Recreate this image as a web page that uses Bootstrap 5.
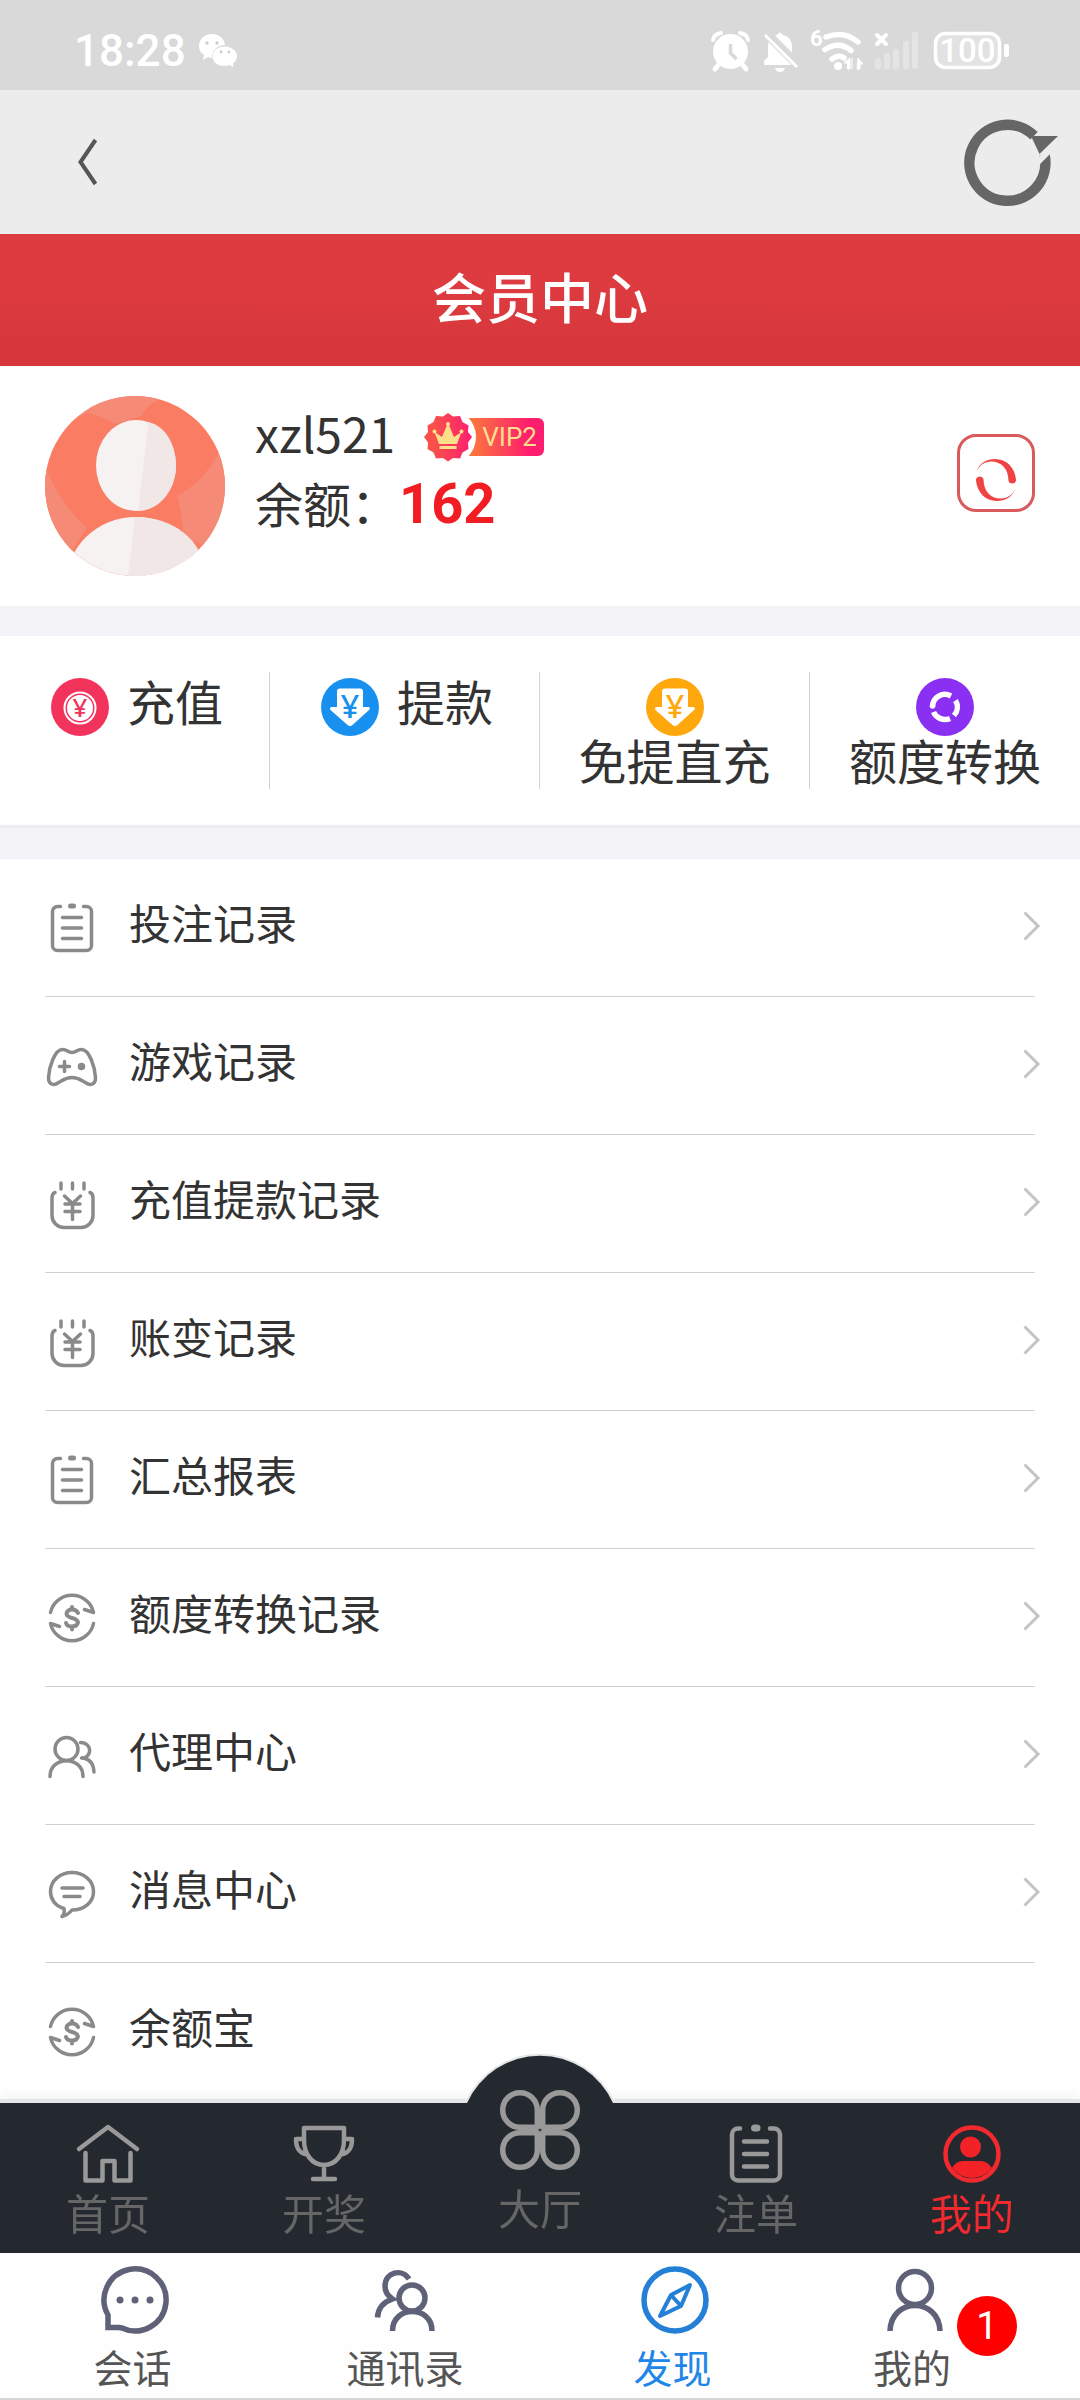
<!DOCTYPE html>
<html lang="zh-CN">
<head>
<meta charset="utf-8">
<meta name="viewport" content="width=device-width, initial-scale=1">
<title>会员中心</title>
<link href="https://cdn.jsdelivr.net/npm/bootstrap@5.3.0/dist/css/bootstrap.min.css" rel="stylesheet">
<style>
  body { font-family: "Noto Sans CJK SC", "Noto Sans", sans-serif; color: #333; background: #fff; padding-bottom: 296px; }
  svg { display: block; flex: none; overflow: visible; }
  a { color: inherit; text-decoration: none; }
  .plain-btn { background: none; border: 0; padding: 0; color: inherit; }

  .status-bar { background: #d9d9d9; color: #fff; height: 90px; padding: 18px 71px 0 74px; }
  .clock { font: 500 44px/66px Roboto, sans-serif; }
  .wechat { margin: 16px 0 0 13px; }
  .status-icons { margin-top: 10px; }
  .app-bar { background: #ececec; height: 144px; padding: 0 22px 0 78px; }
  .page-title { background: linear-gradient(#dd3b40 40%, #d5363b); color: #fff; height: 132px; font-size: 54px; font-weight: 500; line-height: 124px; }

  .profile { height: 240px; padding: 30px 45px 0; gap: 30px; }
  .user-name { font-size: 48px; line-height: 66px; }
  .user-line { gap: 29px; padding-top: 3px; }
  .vip { height: 48px; width: 120px; margin-top: 10px; }
  .vip-pill { position: absolute; left: 45px; top: 5px; width: 75px; height: 38px; border-radius: 0 6px 6px 0; background: linear-gradient(90deg, #fb7a3c, #fe1d6e 80%); color: #fdde8b; font: 400 26px/38px Roboto, sans-serif; padding-left: 13px; }
  .balance { font-size: 48px; line-height: 74px; }
  .balance strong { font: 700 56px/74px Roboto, "Noto Sans", sans-serif; color: #f21d22; }
  .refresh { width: 78px; height: 78px; border: 3px solid #d85a5b; border-radius: 19px; margin-top: 38px; padding-top: 21px; }

  .band { background: #f4f3f8; height: 30px; }
  .band-line { border-top: 3px solid #ededef; height: 34px; }
  .actions { padding: 36px 0; }
  .action { min-height: 117px; column-gap: 18px; font-size: 48px; line-height: 58px; padding: 0 20px; }
  .action:not(:last-child) { border-right: 1px solid #d2d2d2; }
  .action.inline { padding: 0 18px 0 23px; line-height: 56px; }
  .action svg { margin: 6px 0 -6px; }

  .menu { margin: 0 45px; }
  .menu-row { height: 138px; gap: 30px; font-size: 42px; border-bottom: 1px solid #d0d0d0; }
  .menu-row.final { border-bottom-color: transparent; }
  .menu-row span { line-height: 62px; padding-bottom: 12px; }
  .menu-row .line-icon { width: 54px; height: 54px; margin-bottom: 2px; fill: none; stroke: #8a8a8a; stroke-width: 3.5; stroke-linecap: round; stroke-linejoin: round; }
  .chevron { margin: 0 -5px 4px 0; }

  .site-tabs { background: #24282f; height: 150px; box-shadow: 0 -4px 0 #e4e5e9, 0 -8px 10px rgba(0,0,0,.05); color: #666; }
  .site-tab { padding-top: 19px; font-size: 42px; line-height: 44px; gap: 6px; }
  .site-tab svg { fill: none; stroke: #999; stroke-width: 4.5; stroke-linecap: round; stroke-linejoin: round; }
  .site-tab.chosen { color: #f22a2f; }
  .site-tab.hall { padding-top: 0; gap: 15px; }
  .hall .hump { position: absolute; left: 50%; top: -46px; margin-left: -75px; }
  .hall .clover, .hall span { position: relative; }
  .hall .clover { margin-top: -13px; }

  .chat-tabs { background: #fefefe; height: 147px; border-bottom: 2px solid #d6d6d6; color: #555; }
  .chat-tab { padding-top: 9px; font-size: 39px; line-height: 44px; gap: 6px; }
  .chat-tab svg { fill: none; stroke: #5f6178; stroke-width: 5.5; }
  .chat-tab .stack { gap: 6px; }
  .chat-tab .label { padding-right: 5px; }
  .chat-tab.chosen { color: #2186e8; }
  .chat-tab.chosen svg { stroke: #2480d6; }
  .count { width: 60px; height: 60px; background: #f00; color: #fff; font: 400 38px/60px Roboto, sans-serif; margin-top: 34px; }
</style>
</head>
<body>

<svg width="0" height="0" class="position-absolute" aria-hidden="true">
  <defs>
    <symbol id="i-clip" viewBox="0 0 54 54"><path d="M15.500 6.500h-3a5 5 0 0 0-5 5v34a5 5 0 0 0 5 5h29a5 5 0 0 0 5-5v-34a5 5 0 0 0-5-5h-3M17.500 17.500h19M17.500 28h19M17.500 38.500h19"/><path d="M25.500 6h3" stroke-width="5"/></symbol>
    <symbol id="i-yuan" viewBox="0 0 54 54"><path d="M10 16.500q-3 1-3 6v17a12 12 0 0 0 12 12h17a12 12 0 0 0 12-12v-17q0-5-3-6M16 7v6M27.500 7v6M39 7v6M19.500 20l8 7.500 8-7.500M20 28h15M20 35.500h15M27.500 28v15.500"/></symbol>
    <symbol id="i-swap" viewBox="0 0 54 54"><path d="M5.500 22.500a22 22 0 0 1 43 0l-9-3M48.500 33.500a22 22 0 0 1-43 0l9 3"/><path d="M33 23q-1.500-3.500-6-3.500T21.500 23.500q0 3 5.500 4.500t6 4.500q-1 4-6 4t-6-3.500M27 17v2.500M27 37v2.500" stroke-width="4"/></symbol>
    <symbol id="i-down" viewBox="0 0 58 58"><circle cx="29" cy="29" r="29"/><path d="M19 10.500h20q3 0 3 3V29h5.500q2.500 1 .5 3L31.500 47q-2.500 2-5 0L9.500 32q-1.500-2 1-3H16V13.500q0-3 3-3z" fill="#fff"/></symbol>
  </defs>
</svg>

<header>
  <div class="status-bar d-flex align-items-start">
    <span class="clock">18:28</span>
    <svg class="wechat" width="38" height="34" viewBox="0 0 38 34" fill="#fff"><path d="M13 0C5.500 0 0 5 0 12c0 4 2 7 5 9l-1 5 5-3q2 1 4 1C12.500 17 18 11 26 11 25 4 20 0 13 0z"/><path d="M25.500 12.500c-7 0-12 4.500-12 10s5 9.500 12 9.500q2.500 0 5-1l4 2.500-.5-4c2.500-2 4-4.500 4-7.500 0-5-5.500-9.500-12.500-9.500z"/><g fill="#ccc"><circle cx="8" cy="9" r="1.700"/><circle cx="18" cy="9" r="1.700"/><circle cx="22" cy="18" r="1.400"/><circle cx="30" cy="18" r="1.400"/></g></svg>
    <svg class="status-icons ms-auto" width="298" height="46" viewBox="711 28 298 46" fill="#fff" font-family="Roboto, sans-serif">
      <circle cx="730.500" cy="51.500" r="17.500"/><path d="M713 40q1-6 8-7M748 40q-1-6-8-7" stroke="#fff" stroke-width="4" fill="none" stroke-linecap="round"/><path d="M719 64l-4 5M742 64l4 5" stroke="#fff" stroke-width="5" stroke-linecap="round"/><path d="M730.500 44v9l6 6" stroke="#d9d9d9" stroke-width="3.500" fill="none"/>
      <path d="M764 65v-4l4-4V47q0-10 9-12 3-5 6 0 9 2 9 12v10l4 6v2zM775 68h10q-1 4-5 4t-5-4z"/><path d="M766 33l34 34" stroke="#d9d9d9" stroke-width="9"/><path d="M765 35l32 32" stroke="#fff" stroke-width="3"/>
      <text x="810" y="46" font-size="22" font-weight="700">6</text>
      <g fill="none" stroke="#fff" stroke-width="5.500" stroke-linecap="round"><path d="M826 37q18-7 32 5M825 49.500q14-9 26 1M832 59q7-5 12-1"/></g><circle cx="838" cy="66" r="4"/><path d="M850 58v11h-2.500v-6H844zM852 58v11M858 58l5 6h-3v5h-3z" stroke="#fff" stroke-width="1"/>
      <path d="M877 35l9 9M886 35l-9 9" stroke="#fff" stroke-width="4" stroke-linecap="round"/>
      <g fill="#e4e4e4"><rect x="875" y="58" width="6" height="11" rx="2"/><rect x="884" y="53" width="6" height="16" rx="2"/><rect x="893" y="49" width="6" height="20" rx="2"/><rect x="903" y="41" width="6" height="28" rx="2"/><rect x="912" y="32" width="6" height="37" rx="2"/></g>
      <rect x="935.500" y="33.500" width="64" height="34" rx="10" fill="#e2e2e2" stroke="#fff" stroke-width="3.500"/><rect x="1004" y="44" width="5" height="13" rx="2"/>
      <text x="967.500" y="62" font-size="33" font-weight="500" text-anchor="middle">100</text>
    </svg>
  </div>
  <div class="app-bar d-flex align-items-center justify-content-between">
    <button class="plain-btn" type="button" aria-label="返回"><svg width="20" height="46" viewBox="0 0 20 46"><path d="M17.500 1L2.500 23l15 22" fill="none" stroke="#555" stroke-width="4"/></svg></button>
    <button class="plain-btn" type="button" aria-label="刷新"><svg width="93" height="88" viewBox="0 0 93 88"><path d="M79.500 36.700a38 38 0 1 1-10.500-19" fill="none" stroke="#666" stroke-width="10.500"/><path d="M67 50l24-24" stroke="#ececec" stroke-width="6"/><path d="M66 18h27L74.500 36z" fill="#666"/></svg></button>
  </div>
  <h1 class="page-title text-center m-0">会员中心</h1>
</header>

<main>
  <section class="profile d-flex align-items-start">
    <svg width="180" height="180" viewBox="0 0 180 180"><defs><clipPath id="c-av"><circle cx="90" cy="90" r="90"/></clipPath></defs><g clip-path="url(#c-av)"><path fill="#f97c63" d="M0 0h180v180H0z"/><path d="M0 0h120q-17 8-24 20L70 28Q58 20 42 17L0 40zM0 70q15 38 42 62L20 165-10 130zM180 40q-12 40-48 60 6 18 6 40l42 20z" fill="#f58a76"/><ellipse cx="91" cy="69.500" rx="40" ry="45.500" fill="#f6f2f2"/><ellipse cx="91" cy="188" rx="70" ry="67" fill="#f6f2f2"/><path d="M103.500 26c16 4 27.500 21 27.500 43.500 0 26-18 45.500-38 45.500zM90 121c38 0 68 22 72 59H83z" fill="#f1e7e7"/></g></svg>
    <div>
      <div class="user-line d-flex align-items-center">
        <span class="user-name">xzl521</span>
        <span class="vip position-relative d-inline-block">
          <span class="vip-pill">VIP2</span>
          <svg class="position-absolute top-0 start-0" width="50" height="48" viewBox="0 0 50 48"><defs><linearGradient id="g-vip"><stop offset=".2" stop-color="#f9504a"/><stop offset="1" stop-color="#fd1f72"/></linearGradient><clipPath id="c-vip"><path d="M24 5h40v38H24z"/></clipPath></defs><circle cx="24" cy="24" r="28" fill="#fff" clip-path="url(#c-vip)"/><path d="M24 0l5 3.500 7-.5 2.500 6 6 3.500-.5 6.500L48 24l-4 5.500.5 6.500-6 3.500-2.500 6-7-.5-5 3.500-5-3.500-7 .5-2.500-6-6-3.500.5-6.500L0 24l4-5-.5-6.500 6-3.500L12 3l7 .5z" fill="url(#g-vip)"/><path d="M15 31L10.500 19l7.500 5 5.500-13h1L30 24l7.500-5L33 31zM15.500 33h17v3h-17z" fill="#ffe08a"/><g fill="#ffe08a"><circle cx="24" cy="11" r="2"/><circle cx="10.500" cy="18.500" r="2"/><circle cx="37.500" cy="18.500" r="2"/></g></svg>
        </span>
      </div>
      <div class="balance">余额：<strong>162</strong></div>
    </div>
    <button class="plain-btn refresh ms-auto d-flex justify-content-center" type="button" aria-label="刷新余额"><svg width="42" height="44" viewBox="0 0 44 44" fill="#f04444"><path d="M1.500 13C5 4 12 0 21 0c12 0 21 9 22 22 0 5-8 5-8 0C35 11 28 2.500 17 2.500 10 2.500 5 6 1.500 13z"/><path d="M42.500 31C39 40 32 44 23 44 11 44 2 35 1 22c0-5 8-5 8 0 0 11 7 19.500 18 19.500 7 0 12-3.500 15.500-10.500z"/></svg></button>
  </section>
  <div class="band"></div>

  <nav class="actions row g-0">
    <a href="#" class="action inline col-3 d-flex flex-wrap justify-content-center align-content-start"><svg width="58" height="58" viewBox="0 0 58 58"><circle cx="29" cy="29" r="29" fill="#f2345d"/><circle cx="29" cy="30" r="15.500" fill="none" stroke="#fff" stroke-width="2"/><circle cx="29" cy="30" r="13" fill="#fff"/><text x="29" y="39" text-anchor="middle" font-family="Noto Sans" font-weight="500" font-size="26" fill="#f2345d">¥</text></svg><span>充值</span></a>
    <a href="#" class="action inline col-3 d-flex flex-wrap justify-content-center align-content-start"><svg width="58" height="58" viewBox="0 0 58 58"><use href="#i-down" fill="#1890f0"/><text x="29" y="40" text-anchor="middle" font-family="Noto Sans" font-weight="500" font-size="33" fill="#1890f0">¥</text></svg><span>提款</span></a>
    <a href="#" class="action col-3 d-flex flex-wrap justify-content-center align-content-start"><svg width="58" height="58" viewBox="0 0 58 58"><use href="#i-down" fill="#fea80d"/><text x="29" y="40" text-anchor="middle" font-family="Noto Sans" font-weight="500" font-size="33" fill="#fea80d">¥</text></svg><span>免提直充</span></a>
    <a href="#" class="action col-3 d-flex flex-wrap justify-content-center align-content-start"><svg width="58" height="58" viewBox="0 0 58 58"><circle cx="29" cy="29" r="29" fill="#8a30f2"/><g fill="none" stroke="#fff" stroke-width="5.500"><path d="M16.500 29A12.500 12.500 0 0 1 35 18M39.500 22.500A12.500 12.500 0 0 1 38 37.500M34 40.500A12.500 12.500 0 0 1 17.500 34"/></g><circle cx="16.500" cy="28" r="2.700" fill="#fff"/></svg><span>额度转换</span></a>
  </nav>
  <div class="band band-line"></div>

  <nav class="menu">
    <a href="#" class="menu-row d-flex align-items-center"><svg class="line-icon"><use href="#i-clip"/></svg><span>投注记录</span><svg class="chevron ms-auto" width="17" height="30"><path d="M1.500 1.500L15 15 1.500 28.500" fill="none" stroke="#c4c4c4" stroke-width="3"/></svg></a>
    <a href="#" class="menu-row d-flex align-items-center"><svg class="line-icon" viewBox="0 0 54 54"><path d="M17.500 11.500c5 0 5 3 9.500 3s4.500-3 9.500-3c8 0 13.500 18 14 28 0 8-6 8-10 5-4-2-7-5-13.500-5s-9.500 3-13.500 5c-4 3-10 3-10-5 .5-10 6-28 14-28zM14.500 28.500h10M19.500 23.500v10"/><circle cx="36.500" cy="28.500" r="2" fill="#8a8a8a"/></svg><span>游戏记录</span><svg class="chevron ms-auto" width="17" height="30"><path d="M1.500 1.500L15 15 1.500 28.500" fill="none" stroke="#c4c4c4" stroke-width="3"/></svg></a>
    <a href="#" class="menu-row d-flex align-items-center"><svg class="line-icon"><use href="#i-yuan"/></svg><span>充值提款记录</span><svg class="chevron ms-auto" width="17" height="30"><path d="M1.500 1.500L15 15 1.500 28.500" fill="none" stroke="#c4c4c4" stroke-width="3"/></svg></a>
    <a href="#" class="menu-row d-flex align-items-center"><svg class="line-icon"><use href="#i-yuan"/></svg><span>账变记录</span><svg class="chevron ms-auto" width="17" height="30"><path d="M1.500 1.500L15 15 1.500 28.500" fill="none" stroke="#c4c4c4" stroke-width="3"/></svg></a>
    <a href="#" class="menu-row d-flex align-items-center"><svg class="line-icon"><use href="#i-clip"/></svg><span>汇总报表</span><svg class="chevron ms-auto" width="17" height="30"><path d="M1.500 1.500L15 15 1.500 28.500" fill="none" stroke="#c4c4c4" stroke-width="3"/></svg></a>
    <a href="#" class="menu-row d-flex align-items-center"><svg class="line-icon"><use href="#i-swap"/></svg><span>额度转换记录</span><svg class="chevron ms-auto" width="17" height="30"><path d="M1.500 1.500L15 15 1.500 28.500" fill="none" stroke="#c4c4c4" stroke-width="3"/></svg></a>
    <a href="#" class="menu-row d-flex align-items-center"><svg class="line-icon" viewBox="0 0 54 54"><circle cx="21.500" cy="21" r="11.500"/><path d="M5 48.500c0-21 33-21 33 0M35.500 14.500c12 0 12 15.500 1 15.500 8 .5 12 5 12.500 14"/></svg><span>代理中心</span><svg class="chevron ms-auto" width="17" height="30"><path d="M1.500 1.500L15 15 1.500 28.500" fill="none" stroke="#c4c4c4" stroke-width="3"/></svg></a>
    <a href="#" class="menu-row d-flex align-items-center"><svg class="line-icon" viewBox="0 0 54 54"><path d="M19 42.500C10 40 5.500 33 5.500 25.500c0-11 10-19 21.500-19s21.500 8 21.500 19S39 44 27 44q-4 5-10 6.500 3-3 2-8zM17 22h21M19 30.500h16"/></svg><span>消息中心</span><svg class="chevron ms-auto" width="17" height="30"><path d="M1.500 1.500L15 15 1.500 28.500" fill="none" stroke="#c4c4c4" stroke-width="3"/></svg></a>
    <a href="#" class="menu-row final d-flex align-items-center"><svg class="line-icon"><use href="#i-swap"/></svg><span>余额宝</span></a>
  </nav>
</main>

<footer class="fixed-bottom">
  <nav class="site-tabs d-flex position-relative">
    <a href="#" class="site-tab flex-fill w-100 d-flex flex-column align-items-center"><svg width="64" height="62" viewBox="0 0 64 62"><path d="M3 27L32 5l29 22M9.500 31v27.500h17V39h12v19.500h16V31"/></svg><span>首页</span></a>
    <a href="#" class="site-tab flex-fill w-100 d-flex flex-column align-items-center"><svg width="64" height="62" viewBox="0 0 64 62"><path d="M12 6h40v12c0 14-8 25-20 25S12 32 12 18zM12 17H4c0 9 3 14 11 15.500M52 17h8c0 9-3 14-11 15.500M32 43v14M21 57h22"/></svg><span>开奖</span></a>
    <a href="#" class="site-tab hall flex-fill w-100 d-flex flex-column align-items-center position-relative"><svg class="hump" width="150" height="50" viewBox="0 0 150 50"><path d="M2 46A80 80 0 0 1 148 46" style="fill:none;stroke:#e4e5e9;stroke-width:4;stroke-linecap:butt"/><path d="M2 46A80 80 0 0 1 148 46v4H2z" style="fill:#24282f;stroke:none"/></svg><svg class="clover" width="80" height="80" viewBox="0 0 80 80"><path style="stroke-width:5.500" d="M37.300 37.300H20A17.300 17.300 0 1 1 37.300 20zM42.700 37.300H60A17.300 17.300 0 1 0 42.700 20zM37.300 42.700H20A17.300 17.300 0 1 0 37.300 60zM42.700 42.700H60A17.300 17.300 0 1 1 42.700 60z"/></svg><span>大厅</span></a>
    <a href="#" class="site-tab flex-fill w-100 d-flex flex-column align-items-center"><svg width="64" height="62" viewBox="0 0 64 62"><path d="M16 6.500h-2a6 6 0 0 0-6 6v40a6 6 0 0 0 6 6h36a6 6 0 0 0 6-6v-40a6 6 0 0 0-6-6h-4M20 19.500h23M20 32h23M20 44.500h23"/><path d="M30.500 6H33" style="stroke-width:7"/></svg><span>注单</span></a>
    <a href="#" class="site-tab chosen flex-fill w-100 d-flex flex-column align-items-center"><svg width="64" height="62" viewBox="0 0 64 62"><circle cx="32" cy="32" r="26.500" style="stroke:#f22a2f"/><circle cx="30.500" cy="25" r="10.500" fill="#f22226" stroke="none"/><path d="M12 46q4-7 11-7h18q6 0 11 7a25 25 0 0 1-40 0z" fill="#f22226" stroke="none"/></svg><span>我的</span></a>
  </nav>
  <nav class="chat-tabs d-flex">
    <a href="#" class="chat-tab w-25 d-flex justify-content-center"><span class="stack d-flex flex-column align-items-center"><svg width="78" height="76" viewBox="0 0 78 76"><path d="M12 65.500V53a31 31 0 1 1 14 13l-3-.5z"/><g fill="#5f6178" stroke="none"><circle cx="24" cy="38" r="3.500"/><circle cx="39" cy="38" r="3.500"/><circle cx="54" cy="38" r="3.500"/></g></svg><span class="label">会话</span></span></a>
    <a href="#" class="chat-tab w-25 d-flex justify-content-center"><span class="stack d-flex flex-column align-items-center"><svg width="78" height="76" viewBox="0 0 78 76"><circle cx="46" cy="36" r="13"/><path d="M26.500 69c0-26 39.500-26 39.500 0M43 17C36 6 19 10 19 24q0 8 7.500 13c-9 3-14.500 9-15 18.500"/></svg><span>通讯录</span></span></a>
    <a href="#" class="chat-tab chosen w-25 d-flex justify-content-center"><span class="stack d-flex flex-column align-items-center"><svg width="78" height="76" viewBox="0 0 78 76"><circle cx="39" cy="38" r="31"/><path d="M54 23L35 33l-11 21 21-10zM34 32l11 12" style="stroke-width:4;stroke-linejoin:round"/></svg><span class="label">发现</span></span></a>
    <a href="#" class="chat-tab w-25 d-flex justify-content-center"><span class="stack d-flex flex-column align-items-center"><svg width="78" height="76" viewBox="0 0 78 76"><circle cx="42" cy="26" r="16.500"/><path d="M17 69c1-34 49-34 50 0"/></svg><span>我的</span></span><span class="count rounded-circle text-center">1</span></a>
  </nav>
</footer>
<script src="https://cdn.jsdelivr.net/npm/bootstrap@5.3.0/dist/js/bootstrap.bundle.min.js"></script>
</body>
</html>
